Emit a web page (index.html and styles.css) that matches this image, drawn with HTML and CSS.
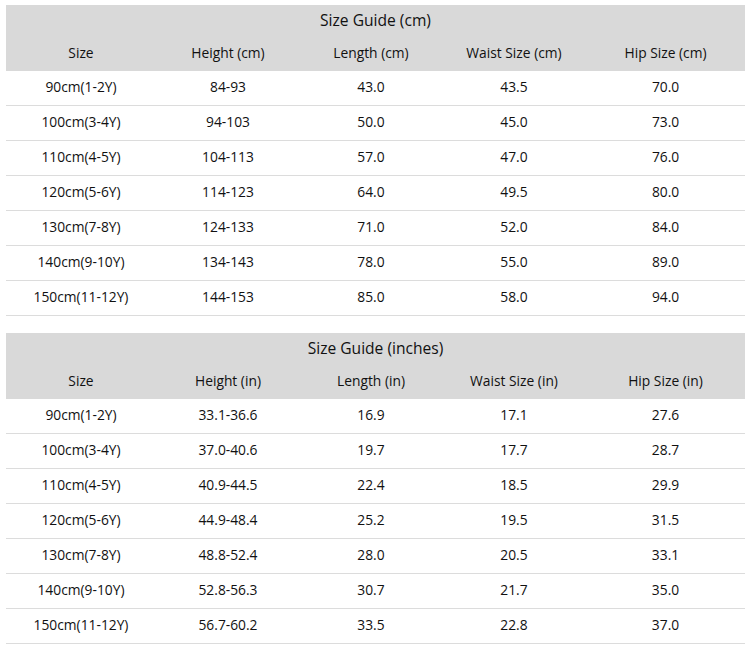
FILE: index.html
```html
<!DOCTYPE html>
<html>
<head>
<meta charset="utf-8">
<link rel="stylesheet" href="styles.css">
</head>
<body>
<div class="page">
<table class="guide">
  <colgroup><col class="c1"><col class="c2"><col class="c3"><col class="c4"><col class="c5"></colgroup>
  <thead>
    <tr class="title"><th colspan="5">Size Guide (cm)</th></tr>
    <tr class="cols"><th>Size</th><th>Height (cm)</th><th>Length (cm)</th><th>Waist Size (cm)</th><th>Hip Size (cm)</th></tr>
  </thead>
  <tbody>
    <tr><td>90cm(1-2Y)</td><td>84-93</td><td>43.0</td><td>43.5</td><td>70.0</td></tr>
    <tr><td>100cm(3-4Y)</td><td>94-103</td><td>50.0</td><td>45.0</td><td>73.0</td></tr>
    <tr><td>110cm(4-5Y)</td><td>104-113</td><td>57.0</td><td>47.0</td><td>76.0</td></tr>
    <tr><td>120cm(5-6Y)</td><td>114-123</td><td>64.0</td><td>49.5</td><td>80.0</td></tr>
    <tr><td>130cm(7-8Y)</td><td>124-133</td><td>71.0</td><td>52.0</td><td>84.0</td></tr>
    <tr><td>140cm(9-10Y)</td><td>134-143</td><td>78.0</td><td>55.0</td><td>89.0</td></tr>
    <tr><td>150cm(11-12Y)</td><td>144-153</td><td>85.0</td><td>58.0</td><td>94.0</td></tr>
  </tbody>
</table>
<table class="guide">
  <colgroup><col class="c1"><col class="c2"><col class="c3"><col class="c4"><col class="c5"></colgroup>
  <thead>
    <tr class="title"><th colspan="5">Size Guide (inches)</th></tr>
    <tr class="cols"><th>Size</th><th>Height (in)</th><th>Length (in)</th><th>Waist Size (in)</th><th>Hip Size (in)</th></tr>
  </thead>
  <tbody>
    <tr><td>90cm(1-2Y)</td><td>33.1-36.6</td><td>16.9</td><td>17.1</td><td>27.6</td></tr>
    <tr><td>100cm(3-4Y)</td><td>37.0-40.6</td><td>19.7</td><td>17.7</td><td>28.7</td></tr>
    <tr><td>110cm(4-5Y)</td><td>40.9-44.5</td><td>22.4</td><td>18.5</td><td>29.9</td></tr>
    <tr><td>120cm(5-6Y)</td><td>44.9-48.4</td><td>25.2</td><td>19.5</td><td>31.5</td></tr>
    <tr><td>130cm(7-8Y)</td><td>48.8-52.4</td><td>28.0</td><td>20.5</td><td>33.1</td></tr>
    <tr><td>140cm(9-10Y)</td><td>52.8-56.3</td><td>30.7</td><td>21.7</td><td>35.0</td></tr>
    <tr><td>150cm(11-12Y)</td><td>56.7-60.2</td><td>33.5</td><td>22.8</td><td>37.0</td></tr>
  </tbody>
</table>
</div>
</body>
</html>
```

FILE: styles.css
```css
html, body {
  margin: 0;
  padding: 0;
  background: #ffffff;
}
body {
  font-family: "Open Sans", "Noto Sans", sans-serif;
  color: #111111;
}
.page {
  padding: 5px 5px 0 6px;
  display: flex;
  flex-direction: column;
  gap: 17px;
}
.guide {
  width: 739px;
  border-collapse: collapse;
  table-layout: fixed;
  font-size: 13.8px;
  line-height: 18px;
}
.c1 { width: 150px; }
.c2 { width: 144px; }
.c3 { width: 142px; }
.c4 { width: 144px; }
.c5 { width: 159px; }
.guide thead th {
  background: #d9d9d9;
  font-weight: normal;
  text-align: center;
  padding: 0;
}
.title th {
  height: 29px;
  font-size: 15.6px;
  line-height: 20px;
  vertical-align: middle;
  padding-top: 0;
}
.cols th {
  height: 37px;
  vertical-align: middle;
  padding-bottom: 3px;
}
.guide td {
  height: 32px;
  text-align: center;
  vertical-align: middle;
  padding: 0 0 2px 0;
  border-bottom: 1px solid #dcdcdc;
}
```
